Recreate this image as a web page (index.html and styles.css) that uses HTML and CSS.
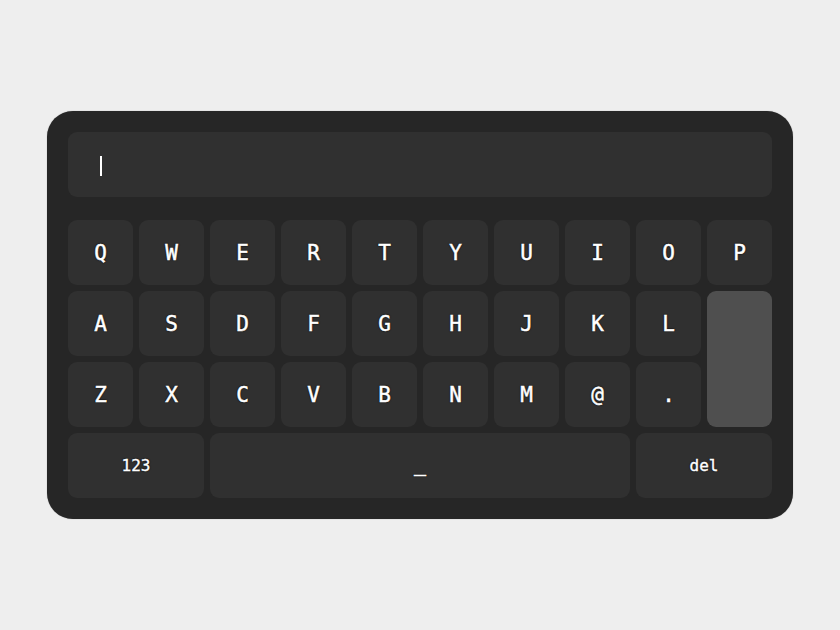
FILE: index.html
```html
<!DOCTYPE html>
<html>
<head>
<meta charset="utf-8">
<link rel="stylesheet" href="styles.css">
</head>
<body>
<div class="stage">
  <div class="board">
    <div class="field"><span class="caret"></span></div>
    <div class="keys">
      <div class="key">Q</div><div class="key">W</div><div class="key">E</div><div class="key">R</div><div class="key">T</div><div class="key">Y</div><div class="key">U</div><div class="key">I</div><div class="key">O</div><div class="key">P</div>
      <div class="key">A</div><div class="key">S</div><div class="key">D</div><div class="key">F</div><div class="key">G</div><div class="key">H</div><div class="key">J</div><div class="key">K</div><div class="key">L</div>
      <div class="key enter"></div>
      <div class="key">Z</div><div class="key">X</div><div class="key">C</div><div class="key">V</div><div class="key">B</div><div class="key">N</div><div class="key">M</div><div class="key">@</div><div class="key">.</div>
      <div class="key small wide2">123</div>
      <div class="key space">_</div>
      <div class="key small wide2">del</div>
    </div>
  </div>
</div>
</body>
</html>
```
FILE: styles.css
```css
html, body {
  margin: 0;
  padding: 0;
  background: #eeeeee;
}
.stage {
  width: 840px;
  height: 630px;
  display: flex;
  align-items: center;
  justify-content: center;
}
.board {
  width: 704px;
  padding: 21px;
  background: #262626;
  border-radius: 26px;
  box-shadow: 0 0 1px rgba(0,0,0,0.4);
  display: flex;
  flex-direction: column;
  gap: 23px;
}
.field {
  height: 65px;
  background: #303030;
  border-radius: 9px;
  display: flex;
  align-items: center;
  padding-left: 32px;
}
.caret {
  width: 2px;
  height: 20px;
  background: #ffffff;
  margin-top: 2px;
}
.keys {
  display: grid;
  grid-template-columns: repeat(10, 65px);
  grid-auto-rows: 65px;
  gap: 6px;
}
.key {
  background: #303030;
  border-radius: 9px;
  display: flex;
  align-items: center;
  justify-content: center;
  color: #ffffff;
  font-family: "DejaVu Sans Mono", monospace;
  font-weight: normal;
  font-size: 21px;
  -webkit-text-stroke: 0.5px #ffffff;
  text-shadow: 0 0 2px #000, 0 0 1px #000;
}
.enter {
  grid-column: 10;
  grid-row: 2 / span 2;
  background: #4f4f4f;
}
.wide2 {
  grid-column: span 2;
}
.space {
  grid-column: span 6;
  font-size: 20px;
  padding-bottom: 4px;
}
.small {
  font-size: 16px;
  -webkit-text-stroke: 0.4px #ffffff;
}
```
